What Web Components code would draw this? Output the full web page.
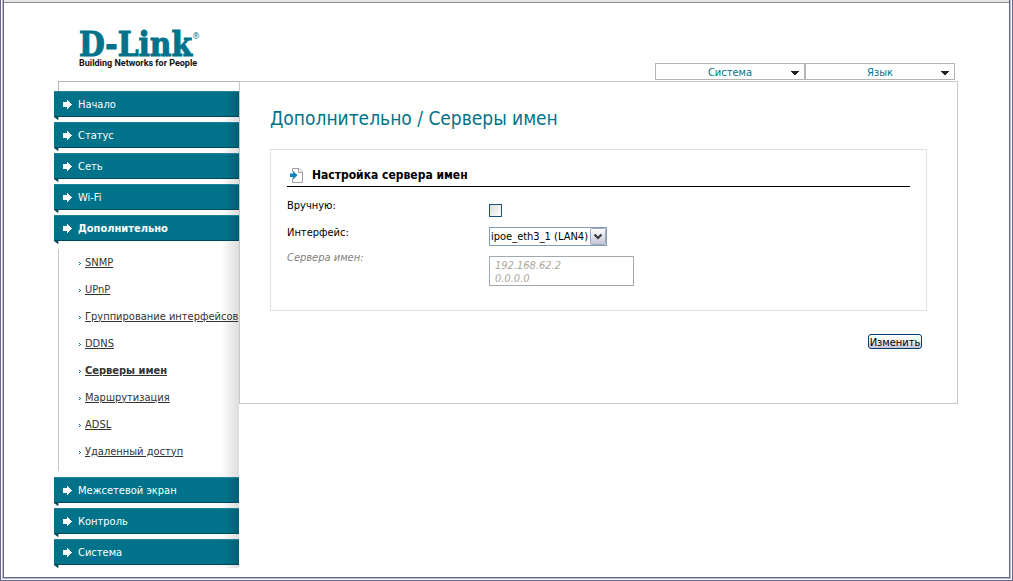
<!DOCTYPE html>
<html lang="ru">
<head>
<meta charset="utf-8">
<title>D-Link</title>
<style>
  html { --teal: #00738a; --ui: "DejaVu Sans Condensed", "Noto Sans", sans-serif; }
  body { margin: 0; background: #fff; color: #000; font: 11px/14px var(--ui); }
</style>
</head>
<body>
<router-page>
  <brand-logo slot="brand"></brand-logo>
  <top-menu slot="tools" label="Система"></top-menu>
  <top-menu slot="tools" label="Язык"></top-menu>

  <nav-item slot="nav">Начало</nav-item>
  <nav-item slot="nav">Статус</nav-item>
  <nav-item slot="nav">Сеть</nav-item>
  <nav-item slot="nav">Wi-Fi</nav-item>
  <nav-item slot="nav" open>Дополнительно
    <sub-item slot="sub">SNMP</sub-item>
    <sub-item slot="sub">UPnP</sub-item>
    <sub-item slot="sub">Группирование интерфейсов</sub-item>
    <sub-item slot="sub">DDNS</sub-item>
    <sub-item slot="sub" current>Серверы имен</sub-item>
    <sub-item slot="sub">Маршрутизация</sub-item>
    <sub-item slot="sub">ADSL</sub-item>
    <sub-item slot="sub">Удаленный доступ</sub-item>
  </nav-item>
  <nav-item slot="nav">Межсетевой экран</nav-item>
  <nav-item slot="nav">Контроль</nav-item>
  <nav-item slot="nav">Система</nav-item>

  <content-panel heading="Дополнительно / Серверы имен">
    <name-server-form></name-server-form>
  </content-panel>
</router-page>

<template id="router-page">
  <style>
    :host { box-sizing: border-box; min-height: 100vh; border: solid #68668a; border-width: 0 1px 1px; padding: 0 1px 1px; display: flex; }
    .mid { flex: 1; border: solid #b9b8d0; border-width: 0 1px 1px; display: flex; min-width: 0; }
    .inner { flex: 1; border: solid #68668a; border-width: 0 1px 1px; min-width: 0; }
    .strip { height: 2px; background: #e4e4e4; border-bottom: 1px solid #8c8c8c; }
    header { display: flex; justify-content: space-between; align-items: flex-end; height: 77px; margin: 0 54px 0 75px; padding-bottom: 1px; }
    .tools { display: flex; }
    .cols { display: flex; align-items: flex-start; margin: 0 51px 0 50px; }
    nav { flex: none; width: 185px; padding-bottom: 3px; background: linear-gradient(to left, #dcdcdc, #fff 18px) no-repeat 0 36px; }
    .cap { height: 9px; margin-left: 4px; border: solid #b5b5b5; border-width: 1px 0 0 1px; }
    main { flex: 1; min-width: 0; }
  </style>
  <div class="mid"><div class="inner">
    <div class="strip"></div>
    <header><slot name="brand"></slot><div class="tools"><slot name="tools"></slot></div></header>
    <div class="cols">
      <nav aria-label="Меню"><div class="cap"></div><slot name="nav"></slot></nav>
      <main><slot></slot></main>
    </div>
  </div></div>
</template>

<template id="brand-logo">
  <style>
    :host { display: block; align-self: flex-start; margin-top: 29px; }
    .name { display: flex; color: var(--teal); font: bold 33px/26px "DejaVu Serif Condensed", "DejaVu Serif", serif; -webkit-text-stroke: 1px var(--teal); }
    sup { font: 9px/8px var(--ui); -webkit-text-stroke: 0; }
    .tag { color: #111; font: bold 9px/11px Roboto, sans-serif; white-space: nowrap; }
  </style>
  <div class="name"><span>D-Link</span><sup>®</sup></div>
  <div class="tag">Building Networks for People</div>
</template>

<template id="top-menu">
  <style>
    :host { display: block; width: 150px; }
    button { display: flex; align-items: center; box-sizing: border-box; width: 100%; height: 17px; margin: 0; padding: 0 5px; border: 1px solid #b5b5b5; background: #fff; color: var(--teal); font: 11px/14px var(--ui); }
    span { flex: 1; padding: 2px 0 0 8px; }
    svg { flex: none; margin: 2px 0 0; }
  </style>
  <button type="button" aria-haspopup="menu"><span></span><svg width="8" height="4" shape-rendering="crispEdges" fill="#222"><path d="M0 0h8v1h-1v1h-1v1h-1v1h-2v-1h-1v-1h-1v-1h-1z"/></svg></button>
</template>

<template id="nav-item">
  <style>
    :host { display: block; margin-bottom: 5px; }
    :host(:last-of-type) { margin-bottom: 0; }
    .bar { position: relative; display: flex; align-items: center; gap: 5px; box-sizing: border-box; height: 26px; padding-left: 9px; border: solid #1b8297; border-width: 1px 0; border-bottom-color: #00495b; background: linear-gradient(to left, #005f73, var(--teal) 14px); color: #fff; text-decoration: none; }
    .bar::after { content: ""; position: absolute; left: 0; top: 25px; width: 5px; height: 3px; background: linear-gradient(#b5b5b5, #b5b5b5) right / 1px no-repeat, #00495b; clip-path: polygon(0 0, 100% 0, 100% 100%, 80% 100%); }
    :host([open]) .bar { font-weight: bold; }
    ul { display: none; margin: 8px 0 6px 4px; padding: 0 0 6px; border-left: 1px solid #c4c4c4; list-style: none; }
    :host([open]) ul { display: block; }
    svg { flex: none; }
    span { padding-top: 2px; }
  </style>
  <a class="bar" href="#"><svg width="10" height="9" shape-rendering="crispEdges" fill="#fff"><path d="M0 2h4V0h1v1h1v1h1v1h1v1h1v1h-1v1h-1v1h-1v1h-1v1h-1V7h-4z"/></svg><span><slot></slot></span></a>
  <ul><slot name="sub"></slot></ul>
</template>

<template id="sub-item">
  <style>
    :host { display: block; }
    div { display: flex; align-items: center; height: 27px; padding-left: 20px; gap: 4px; }
    svg { flex: none; margin-top: 1px; }
    a { color: #333; white-space: nowrap; text-decoration: underline; }
    :host([current]) a { font-weight: bold; }
  </style>
  <div><svg width="2" height="3" shape-rendering="crispEdges" fill="#00738a"><path d="M0 0h1v1h1v1h-1v1h-1v-1h1v-1h-1z"/></svg><a href="#"><slot></slot></a></div>
</template>

<template id="content-panel">
  <style>
    :host { display: block; box-sizing: border-box; min-height: 323px; padding: 24px 30px; border: 1px solid #c8c8c8; }
    h1 { margin: 0 0 19px; color: var(--teal); font: 19px/24px var(--ui); }
  </style>
  <h1></h1><slot></slot>
</template>

<template id="name-server-form">
  <style>
    :host { display: block; }
    section { box-sizing: border-box; min-height: 162px; padding: 18px 16px 22px; border: 1px solid #e0e0e0; }
    h2 { display: flex; align-items: center; gap: 8px; margin: 0 0 11px; padding: 0 0 3px 3px; border-bottom: 1px solid #000; font: bold 12px/15px var(--ui); }
    .row { display: flex; align-items: flex-start; }
    .row > label { flex: none; width: 202px; padding-top: 1px; }
    .row.off > label { padding-top: 0; color: #808080; font-style: italic; }
    .check { height: 27px; }
    .pick { height: 26px; }
    input { appearance: none; box-sizing: border-box; width: 13px; height: 13px; margin: 6px 0 0; border: 1px solid #1c5180; background: linear-gradient(135deg, #dcdcd7, #fff); }
    input:checked { background: #1c5180; }
    .select { position: relative; margin-top: 2px; }
    select { appearance: none; display: block; box-sizing: border-box; width: 118px; height: 19px; margin: 0; padding: 1px 18px 0 1px; border: 1px solid #7f9db9; border-radius: 0; background: #fff; color: #000; font: 11px/14px var(--ui); }
    .select svg { position: absolute; right: 1px; top: 1px; pointer-events: none; }
    textarea { display: block; box-sizing: border-box; width: 145px; height: 30px; margin: 5px 0 0; padding: 2px 5px; border: 1px solid #a0a8b0; background: #fff; color: #aca899; font: italic 11px/13px var(--ui); resize: none; overflow: hidden; }
    footer { display: flex; justify-content: flex-end; padding: 23px 5px 0; }
    button { box-sizing: border-box; width: 54px; height: 15px; padding: 1px 0 0; border: 1px solid #003c74; border-radius: 3px; background: linear-gradient(#fff, #eeeef5 50%, #c6c5d7); color: #000; font: 11px/13px var(--ui); white-space: nowrap; display: flex; justify-content: center; align-items: center; }
  </style>
  <form onsubmit="return false">
    <section>
      <h2><svg width="14" height="15" viewBox="0 0 14 15" aria-hidden="true"><path d="M2.500 4V.5H9L12.500 4V14.500H2.500V10" fill="#fff" stroke="#a0a0a0"/><path d="M8.500.5V4.500H12.500" fill="none" stroke="#a0a0a0"/><path d="M0 5.500H3V3L7.500 7.200L3 11.500V9H0Z" fill="#0a86c0"/></svg><span>Настройка сервера имен</span></h2>
      <div class="row check"><label for="manual">Вручную:</label><input id="manual" type="checkbox"></div>
      <div class="row pick"><label for="iface">Интерфейс:</label><div class="select"><select id="iface"><option>ipoe_eth3_1 (LAN4)</option></select><svg width="16" height="17" aria-hidden="true"><defs><linearGradient id="g" x2="0" y2="1"><stop stop-color="#fff"/><stop offset="1" stop-color="#c3c3d5"/></linearGradient></defs><rect x=".5" y=".5" width="15" height="16" rx="1" fill="url(#g)" stroke="#a6a6bd"/><path d="M4.500 6.500L8 10L11.500 6.500" fill="none" stroke="#3c3c44" stroke-width="2.200"/></svg></div></div>
      <div class="row off"><label for="servers">Сервера имен:</label><textarea id="servers" disabled>192.168.62.2
0.0.0.0</textarea></div>
    </section>
    <footer><button type="submit">Изменить</button></footer>
  </form>
</template>

<script>
  class TemplateElement extends HTMLElement {
    constructor() {
      super();
      const template = document.getElementById(this.localName);
      this.attachShadow({ mode: 'open' }).append(template.content.cloneNode(true));
    }
  }
  customElements.define('router-page', class extends TemplateElement {});
  customElements.define('brand-logo', class extends TemplateElement {});
  customElements.define('nav-item', class extends TemplateElement {});
  customElements.define('sub-item', class extends TemplateElement {
    connectedCallback() { this.setAttribute('role', 'listitem'); }
  });
  customElements.define('name-server-form', class extends TemplateElement {});
  customElements.define('top-menu', class extends TemplateElement {
    connectedCallback() { this.shadowRoot.querySelector('span').textContent = this.getAttribute('label'); }
  });
  customElements.define('content-panel', class extends TemplateElement {
    connectedCallback() { this.shadowRoot.querySelector('h1').textContent = this.getAttribute('heading'); }
  });
</script>
</body>
</html>
